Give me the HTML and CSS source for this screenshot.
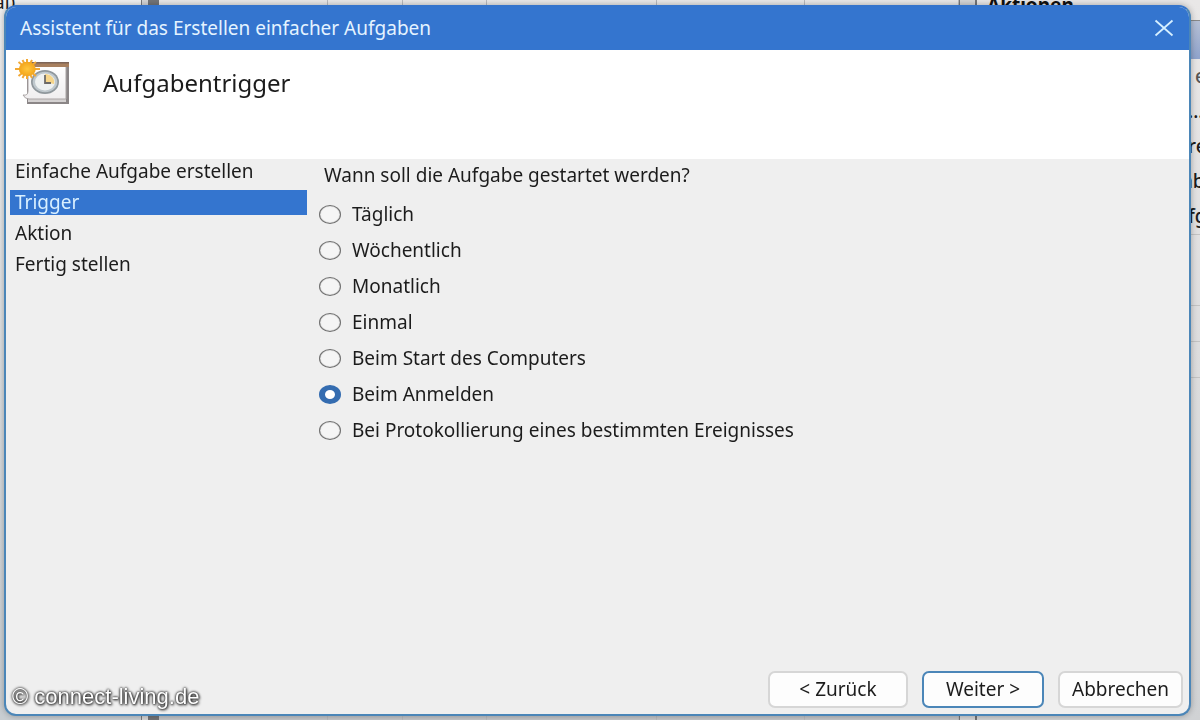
FILE: index.html
```html
<!DOCTYPE html>
<html lang="de">
<head>
    <meta charset="UTF-8">
    <meta name="viewport" content="width=device-width, initial-scale=1.0">
    <title>Assistent für das Erstellen einfacher Aufgaben</title>
    <link rel="stylesheet" href="styles.css">
</head>
<body>

    <!-- Window behind the wizard -->
    <div class="console">
        <div class="tree">
            <span>al)</span>
        </div>
        <div class="splitter"></div>
        <div class="task-list">
            <div class="column"></div>
            <div class="column"></div>
            <div class="column"></div>
            <div class="column"></div>
            <div class="column"></div>
            <div class="column"></div>
        </div>
        <div class="splitter light"></div>
        <div class="actions">
            <h2>Aktionen</h2>
            <div class="actions-bar"></div>
            <ul>
                <li class="muted">e</li>
                <li>...</li>
                <li>re</li>
                <li class="wide">ab</li>
                <li>fg</li>
                <li class="empty tall"></li>
                <li class="empty"></li>
                <li class="empty"></li>
            </ul>
        </div>
    </div>

    <!-- Wizard -->
    <div class="wizard">
        <div class="titlebar">
            <span>Assistent für das Erstellen einfacher Aufgaben</span>
            <button type="button" class="close-btn" aria-label="Schließen">
                <svg width="20" height="18" viewBox="0 0 20 18">
                    <path d="M1.5 1.5L18.5 16.5M18.5 1.5L1.5 16.5" stroke="#d5efff" stroke-width="1.8" fill="none"/>
                </svg>
            </button>
        </div>

        <div class="header">
            <svg class="task-icon" width="56" height="48" viewBox="0 0 56 48">
                <defs>
                    <linearGradient id="page" x1="0" y1="0" x2="0" y2="1">
                        <stop offset="0" stop-color="#ffffff"/>
                        <stop offset="1" stop-color="#f0eeef"/>
                    </linearGradient>
                    <radialGradient id="sun">
                        <stop offset="0" stop-color="#ffc63c"/>
                        <stop offset="1" stop-color="#f3a51c"/>
                    </radialGradient>
                </defs>
                <path d="M12 5H54V46H12Z" fill="#8b8687"/>
                <path d="M13 41H51V44H13Z" fill="#d4d1d1"/>
                <path d="M13 8H51V41H14Q10 41 8 37Q13 38 13 33Z" fill="url(#page)" stroke="#aaa5a5" stroke-width="1"/>
                <path d="M14 4H54V9H14Z" fill="#a8805f"/>
                <path d="M14 4H54V5.5H14Z" fill="#7d6558"/>
                <ellipse cx="30" cy="24" rx="14" ry="12" fill="#8f979c"/>
                <ellipse cx="30" cy="24" rx="12.3" ry="10.3" fill="#bfc8cd"/>
                <ellipse cx="30" cy="24" rx="10" ry="8.5" fill="#eef1f1"/>
                <path d="M30 24V16A9.500 8 0 0 1 39 26Z" fill="#f6d58a"/>
                <path d="M30 17V25H36" stroke="#6d6b68" stroke-width="1.8" fill="none"/>
                <path d="M12 1V21M0 11H25M3.500 4L21 18M21 4L3.500 18M7.500 2L17 20M17 2L7.500 20" stroke="#f2a935" stroke-width="2" fill="none"/>
                <ellipse cx="12.300" cy="11" rx="8.500" ry="7.200" fill="url(#sun)"/>
            </svg>
            <h1>Aufgabentrigger</h1>
        </div>

        <div class="content">
            <ul class="steps">
                <li>Einfache Aufgabe erstellen</li>
                <li class="active">Trigger</li>
                <li>Aktion</li>
                <li>Fertig stellen</li>
            </ul>

            <fieldset class="triggers">
                <legend>Wann soll die Aufgabe gestartet werden?</legend>
                <label><input type="radio" name="trigger">Täglich</label>
                <label><input type="radio" name="trigger">Wöchentlich</label>
                <label><input type="radio" name="trigger">Monatlich</label>
                <label><input type="radio" name="trigger">Einmal</label>
                <label><input type="radio" name="trigger">Beim Start des Computers</label>
                <label><input type="radio" name="trigger" checked>Beim Anmelden</label>
                <label><input type="radio" name="trigger">Bei Protokollierung eines bestimmten Ereignisses</label>
            </fieldset>
        </div>

        <div class="footer">
            <span class="copyright">© connect-living.de</span>
            <button type="button" class="btn back">&lt; Zurück</button>
            <button type="button" class="btn primary">Weiter &gt;</button>
            <button type="button" class="btn">Abbrechen</button>
        </div>
    </div>

</body>
</html>
```
FILE: styles.css
```css
* {
    margin: 0;
    padding: 0;
    box-sizing: border-box;
}

body {
    height: 100vh;
    overflow: hidden;
    background-color: #d2d4d6;
    color: #1c1c1c;
    font-family: "Noto Sans", "Open Sans", sans-serif;
    font-size: 19px;
    line-height: 24px;
}

ul {
    list-style: none;
}

/* Window behind the wizard */
.console {
    display: flex;
    height: 100vh;
    background: linear-gradient(#e9e8e8, #c3c5c8);
}

.tree {
    width: 141px;
    overflow: hidden;
    background: linear-gradient(#f0f0f0, #c8cdd1);
}

.tree span {
    display: block;
    margin-top: -10px;
    margin-left: -6px;
}

.splitter {
    width: 18px;
    border-left: 1px solid #77797c;
    border-right: 11px solid #737477;
    background-color: #d5d5d6;
}

.splitter.light {
    border-right: 2px solid #737477;
    border-left-color: #77797c;
}

.task-list {
    flex: 1;
    display: grid;
    grid-template-columns: 169fr 75fr 84fr 169fr 148fr 154fr;
}

.column {
    border-right: 1px solid #b9babd;
}

.actions {
    width: 223px;
    overflow: hidden;
    background: linear-gradient(#e9e7e7, #d0d2d4);
}

.actions h2 {
    height: 21px;
    margin-top: -7px;
    padding-left: 10px;
    font-size: 19px;
    line-height: 24px;
    color: #111;
}

.actions-bar {
    height: 39px;
    margin-top: 6px;
    border-top: 1px solid #888;
    background: linear-gradient(#b5bfd4, #8fa3cc);
}

.actions li {
    height: 35px;
    padding-left: 211px;
    line-height: 35px;
    white-space: nowrap;
    font-weight: 500;
}

.actions li.wide {
    padding-left: 205px;
}

.actions li.muted {
    padding-left: 218px;
    color: #555;
}

.actions li.empty {
    height: 36px;
    border-bottom: 1px solid #c3c3c3;
}

.actions li.tall {
    height: 72px;
    border-top: 1px solid #c3c3c3;
}

/* Wizard window */
.wizard {
    position: fixed;
    top: 5px;
    right: 9px;
    bottom: 4px;
    left: 4px;
    display: flex;
    flex-direction: column;
    overflow: hidden;
    border: 2px solid #4b86b8;
    border-top-color: #3574cc;
    border-radius: 12px;
    background-color: #efefef;
    box-shadow: 0 0 6px rgba(0, 0, 0, 0.3);
}

.titlebar {
    display: flex;
    justify-content: space-between;
    align-items: center;
    height: 43px;
    padding: 0 13px 2px 14px;
    background-color: #3475cf;
    color: #e4f3ff;
}

.close-btn {
    display: flex;
    padding: 2px;
    border: none;
    background: none;
    cursor: pointer;
}

.header {
    display: flex;
    align-items: flex-start;
    gap: 32px;
    height: 109px;
    padding: 8px 9px;
    background-color: #fff;
}

.header h1 {
    padding-top: 9px;
    font-size: 24px;
    font-weight: 400;
    line-height: 32px;
}

.content {
    flex: 1;
    display: flex;
    gap: 12px;
    padding: 0 4px;
}

.steps {
    display: flex;
    flex-direction: column;
    gap: 6px;
    width: 297px;
}

.steps li {
    height: 25px;
    padding-left: 5px;
}

.steps li.active {
    background-color: #3475cf;
    color: #d8efff;
}

.triggers {
    border: none;
}

.triggers legend {
    height: 37px;
    padding: 4px 5px;
}

.triggers label {
    display: flex;
    align-items: center;
    gap: 11px;
    height: 36px;
}

/* Radio buttons */
.triggers input {
    appearance: none;
    width: 22px;
    height: 19px;
    border: 1px solid #707070;
    border-radius: 50%;
    background-color: #f5f5f5;
    box-shadow: inset 0 0 1px #707070;
}

.triggers input:checked {
    border-color: #346cb0;
    border-width: 5px 6px;
    background-color: #fff;
    box-shadow: none;
}

.footer {
    display: flex;
    align-items: center;
    gap: 14px;
    padding: 0 6px 5px;
}

.copyright {
    margin-right: auto;
    padding-top: 16px;
    font-family: "Liberation Sans", Arial, sans-serif;
    font-size: 22px;
    color: #fff;
    text-shadow: 0 0 3px #222, 1px 1px 3px #222, 0 0 2px #444;
}

.btn {
    width: 125px;
    height: 37px;
    border: 2px solid #d6d6d6;
    border-radius: 7px;
    background-color: #fdfdfd;
    color: #1c1c1c;
    font-family: inherit;
    font-size: 19px;
    cursor: pointer;
}

.btn.back {
    width: 140px;
}

.btn.primary {
    width: 122px;
    border-color: #4b86b8;
}
```
